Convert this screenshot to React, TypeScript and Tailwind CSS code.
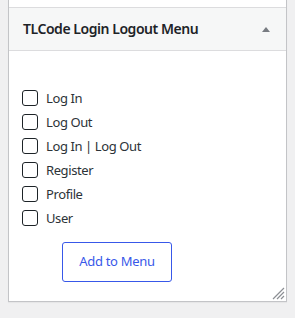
import React from 'react';

const items = ['Log In', 'Log Out', 'Log In | Log Out', 'Register', 'Profile', 'User'];

const App: React.FC = () => {
  return (
    <div className="w-[295px] h-[318px] bg-[#f0f0f1] px-2 font-['Noto_Sans',sans-serif] text-[#1d2327]">
      <div className="relative bg-white border-x border-b border-[#c3c4c7] shadow-[0_1px_1px_rgba(0,0,0,0.04)]">
        <div className="h-2 border-b border-[#dcdcde]" />
        <div className="h-[43px] bg-[#f6f7f7] border-b border-[#dcdcde] flex items-center justify-between pl-[14px] pr-[15px]">
          <h3 className="text-[14px] font-semibold leading-none tracking-[-0.45px]">TLCode Login Logout Menu</h3>
          <svg width="10" height="6" viewBox="0 0 10 6">
            <path d="M1 6 L5 1 L9 6 Z" fill="#787c82" />
          </svg>
        </div>
        <div className="pt-[35px] pl-[13px] pb-[19px]">
          <ul className="flex flex-col">
            {items.map((label) => (
              <li key={label} className="flex items-center gap-[8px] h-6">
                <span className="w-4 h-4 shrink-0 border border-[#1d2327] rounded-[3px] bg-white" />
                <span className="text-[13px] leading-none text-[#2c3338] tracking-[-0.4px]">{label}</span>
              </li>
            ))}
          </ul>
          <button className="mt-3 ml-[40px] w-[110px] h-10 border border-[#3858e9] rounded-[3px] text-[13px] tracking-[-0.3px] text-[#3858e9] bg-white">
            Add to Menu
          </button>
        </div>
        <svg className="absolute right-[1px] bottom-[1px]" width="14" height="14" viewBox="0 0 14 14">
          <path d="M13 2 L2 13 M13 6 L6 13 M13 10 L10 13" stroke="#8c8f94" strokeWidth="1.2" />
        </svg>
      </div>
    </div>
  );
};

export default App;
